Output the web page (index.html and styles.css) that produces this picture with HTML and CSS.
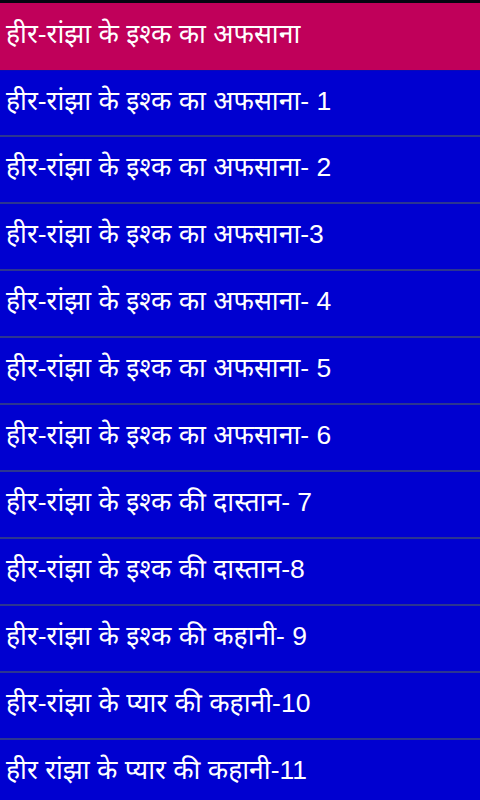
FILE: index.html
```html
<!DOCTYPE html>
<html lang="hi">
<head>
<meta charset="utf-8">
<link rel="stylesheet" href="styles.css">
</head>
<body>
<div class="statusbar"></div>
<div class="header">हीर-रांझा के इश्क का अफसाना</div>
<ul class="list">
<li class="item">हीर-रांझा के इश्क का अफसाना- 1</li>
<li class="item">हीर-रांझा के इश्क का अफसाना- 2</li>
<li class="item">हीर-रांझा के इश्क का अफसाना-3</li>
<li class="item">हीर-रांझा के इश्क का अफसाना- 4</li>
<li class="item">हीर-रांझा के इश्क का अफसाना- 5</li>
<li class="item">हीर-रांझा के इश्क का अफसाना- 6</li>
<li class="item">हीर-रांझा के इश्क की दास्तान- 7</li>
<li class="item">हीर-रांझा के इश्क की दास्तान-8</li>
<li class="item">हीर-रांझा के इश्क की कहानी- 9</li>
<li class="item">हीर-रांझा के प्यार की कहानी-10</li>
<li class="item">हीर रांझा के प्यार की कहानी-11</li>
</ul>
</body>
</html>
```
FILE: styles.css
```css
html, body {
  margin: 0;
  padding: 0;
  background: #0000d0;
  overflow: hidden;
  height: 800px;
}
body {
  font-family: "Liberation Sans", "Noto Sans Devanagari", "Noto Sans", sans-serif;
  color: #ffffff;
}
.statusbar {
  height: 3px;
  background: #050510;
}
.header {
  height: 67px;
  background: #c0005a;
  display: flex;
  align-items: center;
  padding-left: 6px;
  font-size: 26.5px;
}
.list {
  list-style: none;
  margin: 0;
  padding: 0;
  border-top: 1px solid #0808b8;
}
.item {
  height: 65px;
  display: flex;
  align-items: center;
  padding-left: 6px;
  font-size: 26.5px;
  border-bottom: 2px solid #2b3590;
  white-space: nowrap;
}
.item:first-child {
  height: 64px;
}
```
